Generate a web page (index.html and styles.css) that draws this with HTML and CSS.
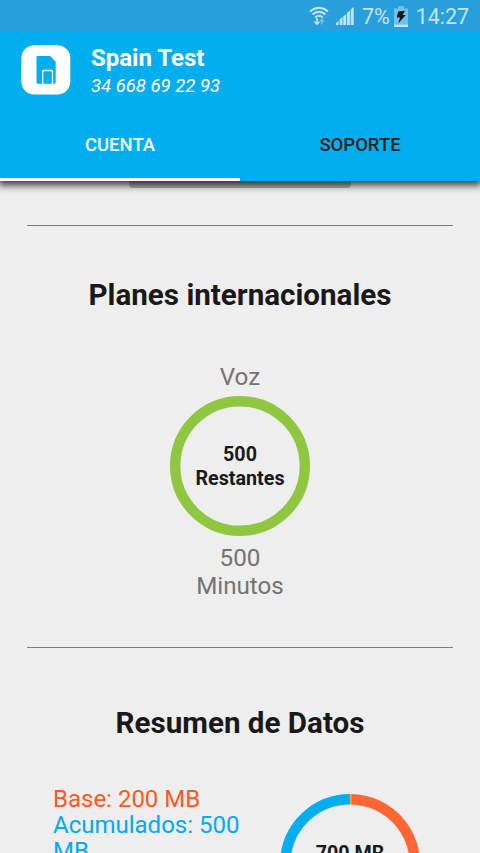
FILE: index.html
```html
<!DOCTYPE html>
<html lang="es">
<head>
    <meta charset="UTF-8">
    <meta name="viewport" content="width=device-width, initial-scale=1.0">
    <title>Cuenta</title>
    <link rel="stylesheet" href="styles.css">
</head>
<body>
    <div class="status-bar">
        <svg class="wifi" width="20" height="20" viewBox="0 0 20 20" fill="none" stroke="#c3e6f7" stroke-width="2">
            <path d="M1 5.6Q10 -2 19 5.6M3.6 8.6Q10 3 16.4 8.6M6.2 11.4Q10 8.2 13.8 11.4"/>
            <path d="M8 12v6M5.4 15.5L8 18.2l2.4-2.5" stroke-width="1.6"/>
            <path d="M13 18.5v-5M10.9 15.4L13 13.2l2.1 2.2" stroke="#74bfe5" stroke-width="1.4"/>
        </svg>
        <svg class="signal" width="18" height="18" viewBox="0 0 18 18" fill="#c3e6f7">
            <path d="M0 18v-2l2.5-2V18zM3.6 18v-5.5l2.9-2.5V18zM7.3 18V9.5l2.9-2.6V18zM11 18V6l2.9-2.6V18zM14.7 18V2.6L17.7 0V18z"/>
        </svg>
        <span class="percent">7%</span>
        <svg class="battery" width="14" height="21" viewBox="0 0 14 21">
            <path d="M0 2.5h4V0h6v2.5h4V21H0z" fill="#74bfe5"/>
            <path d="M0 18.7h14V21H0z" fill="#c3e6f7"/>
            <path d="M4.2 5.4L11 4.8 8.6 9h3.2L4.4 17.2 6 11.5H2.8z" fill="#101820"/>
        </svg>
        <span class="clock">14:27</span>
    </div>
    <header>
        <div class="account">
            <svg class="logo" width="50" height="50" viewBox="0 0 50 50">
                <rect x="0.3" y="0.3" width="49" height="49.3" rx="13" fill="#fff"/>
                <path d="M16.5 11h12.7l5.5 5.8v20.4q0 1.5-1.5 1.5H17q-1.5 0-1.5-1.5V12q0-1 1-1z" fill="#03aeef"/>
                <path d="M21.7 39V26.5q0-1 1-1h7.8q1 0 1 1V39" fill="none" stroke="#fff" stroke-width="1.3"/>
            </svg>
            <div class="account-text">
                <div class="name">Spain Test</div>
                <div class="phone">34 668 69 22 93</div>
            </div>
        </div>
        <nav class="tabs">
            <div class="tab active">CUENTA</div>
            <div class="tab">SOPORTE</div>
        </nav>
    </header>
    <main>
        <div class="previous-button"></div>
        <section class="plans">
            <h2>Planes internacionales</h2>
            <div class="label">Voz</div>
            <div class="ring">
                <svg width="140" height="140" viewBox="0 0 140 140">
                    <circle cx="70" cy="70" r="64.8" fill="none" stroke="#90c740" stroke-width="10.4"/>
                </svg>
                <div class="ring-text">500<br>Restantes</div>
            </div>
            <div class="label total">500<br>Minutos</div>
        </section>
        <section class="data">
            <h2>Resumen de Datos</h2>
            <div class="data-row">
                <div class="legend">
                    <div class="base">Base: 200 MB</div>
                    <div class="saved">Acumulados: 500 MB</div>
                </div>
                <div class="ring">
                    <svg width="140" height="140" viewBox="0 0 140 140" fill="none" stroke-width="10.4">
                        <path d="M133.2 84.4A64.8 64.8 0 1 1 70 5.2" stroke="#03aeef"/>
                        <path d="M71 5.2A64.8 64.8 0 0 1 133.2 84.4" stroke="#ff6633"/>
                        <path d="M69.8 5.2h2" stroke="#fba130"/>
                    </svg>
                    <div class="ring-text">700 MB<br>Restantes</div>
                </div>
            </div>
        </section>
    </main>
</body>
</html>
```
FILE: styles.css
```css
* {
    box-sizing: border-box;
}
html {
    overflow: hidden;
}
body {
    margin: 0;
    height: 853px;
    overflow: hidden;
    font-family: Roboto, "Liberation Sans", sans-serif;
    background-color: #eeeeee;
    color: #191919;
}
.status-bar {
    display: flex;
    height: 32px;
    padding: 6px 11px 0 0;
    justify-content: flex-end;
    background-color: #289fda;
    color: #c3e6f7;
    font-size: 22px;
    line-height: 22px;
    position: relative;
    z-index: 2;
}
.signal {
    margin: 1px 8px 0 7px;
}
.battery {
    margin: 0 8px 0 4px;
}
.percent {
    font-size: 21.5px;
}
.clock {
    font-size: 21.4px;
}
.wifi, .signal, .battery {
    flex: none;
}
header {
    height: 149px;
    background-color: #03aeef;
    color: white;
    box-shadow: 0 2px 8px 2px rgba(0, 0, 0, 0.8);
    position: relative; /* keeps the shadow over the content */
    z-index: 1;
}
.account {
    display: flex;
    height: 77px;
    padding: 13px 0 0 21px;
    gap: 20px;
}
.name {
    font-size: 24px;
    font-weight: bold;
    line-height: 28px;
    margin-top: -1px;
}
.phone {
    font-size: 18.5px;
    font-style: italic;
    line-height: 22px;
    margin-top: 3px;
}
.tabs {
    display: flex;
    height: 72px;
}
.tab {
    flex: 1;
    padding-top: 25px;
    text-align: center;
    font-size: 18.5px;
    font-weight: 500;
    line-height: 22px;
    color: #24201f;
}
.tab.active {
    color: white;
    border-bottom: 3px solid white;
}
.previous-button {
    width: 222px;
    height: 7px;
    margin: 0 auto 37px;
    border-radius: 0 0 4px 4px;
    background-color: #b5b5b5;
}
section {
    margin: 0 27px;
    border-top: 1px solid #7d7d7d;
    text-align: center;
}
.plans {
    height: 422px;
}
h2 {
    margin: 0;
    padding-top: 51px;
    font-size: 29.6px;
    font-weight: bold;
    line-height: 36px;
}
.label {
    margin-top: 50px;
    font-size: 24.2px;
    line-height: 28px;
    color: #737373;
}
.total {
    margin-top: 8px;
}
.ring {
    display: grid;
    flex: none;
    width: 140px;
    height: 140px;
    margin: 5px auto 0;
    place-items: center;
}
.ring svg, .ring-text {
    grid-area: 1 / 1;
}
.ring-text {
    padding-top: 2px;
    font-size: 19.7px;
    font-weight: bold;
    line-height: 24px;
    text-align: center;
}
.data h2 {
    padding-top: 57px;
}
.data-row {
    display: flex;
    padding: 45px 33px 0 26px;
    justify-content: space-between;
}
.data .ring {
    margin: 8px 0 0;
}
.data .ring-text {
    padding-top: 3px;
}
.legend {
    width: 200px;
    text-align: left;
    font-size: 24px;
    line-height: 26px;
}
.base {
    color: #ff5a1f;
}
.saved {
    color: #03a9f4;
}
```
